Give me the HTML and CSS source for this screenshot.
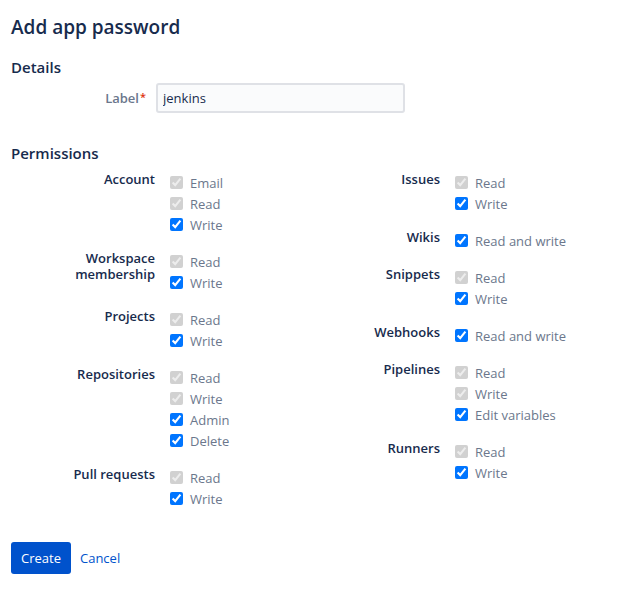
FILE: index.html
```html
<!DOCTYPE html>
<html lang="en">
<head>
    <meta charset="UTF-8">
    <title>Add app password</title>
    <link rel="stylesheet" href="styles.css">
</head>
<body>
    <form class="page">
        <h1 class="page-title">Add app password</h1>

        <h2 class="section-title">Details</h2>
        <div class="field-row">
            <label class="field-label" for="label">Label<span class="required">*</span></label>
            <input class="text-input" type="text" id="label" value="jenkins">
        </div>

        <h2 class="section-title permissions-title">Permissions</h2>
        <div class="perm-columns">
            <div class="perm-column">
                <div class="perm-group">
                    <div class="perm-label">Account</div>
                    <div class="perm-options">
                        <label class="option"><input type="checkbox" checked disabled> Email</label>
                        <label class="option"><input type="checkbox" checked disabled> Read</label>
                        <label class="option"><input type="checkbox" checked> Write</label>
                    </div>
                </div>
                <div class="perm-group">
                    <div class="perm-label">Workspace membership</div>
                    <div class="perm-options">
                        <label class="option"><input type="checkbox" checked disabled> Read</label>
                        <label class="option"><input type="checkbox" checked> Write</label>
                    </div>
                </div>
                <div class="perm-group">
                    <div class="perm-label">Projects</div>
                    <div class="perm-options">
                        <label class="option"><input type="checkbox" checked disabled> Read</label>
                        <label class="option"><input type="checkbox" checked> Write</label>
                    </div>
                </div>
                <div class="perm-group">
                    <div class="perm-label">Repositories</div>
                    <div class="perm-options">
                        <label class="option"><input type="checkbox" checked disabled> Read</label>
                        <label class="option"><input type="checkbox" checked disabled> Write</label>
                        <label class="option"><input type="checkbox" checked> Admin</label>
                        <label class="option"><input type="checkbox" checked> Delete</label>
                    </div>
                </div>
                <div class="perm-group">
                    <div class="perm-label">Pull requests</div>
                    <div class="perm-options">
                        <label class="option"><input type="checkbox" checked disabled> Read</label>
                        <label class="option"><input type="checkbox" checked> Write</label>
                    </div>
                </div>
            </div>

            <div class="perm-column">
                <div class="perm-group">
                    <div class="perm-label">Issues</div>
                    <div class="perm-options">
                        <label class="option"><input type="checkbox" checked disabled> Read</label>
                        <label class="option"><input type="checkbox" checked> Write</label>
                    </div>
                </div>
                <div class="perm-group">
                    <div class="perm-label">Wikis</div>
                    <div class="perm-options">
                        <label class="option"><input type="checkbox" checked> Read and write</label>
                    </div>
                </div>
                <div class="perm-group">
                    <div class="perm-label">Snippets</div>
                    <div class="perm-options">
                        <label class="option"><input type="checkbox" checked disabled> Read</label>
                        <label class="option"><input type="checkbox" checked> Write</label>
                    </div>
                </div>
                <div class="perm-group">
                    <div class="perm-label">Webhooks</div>
                    <div class="perm-options">
                        <label class="option"><input type="checkbox" checked> Read and write</label>
                    </div>
                </div>
                <div class="perm-group">
                    <div class="perm-label">Pipelines</div>
                    <div class="perm-options">
                        <label class="option"><input type="checkbox" checked disabled> Read</label>
                        <label class="option"><input type="checkbox" checked disabled> Write</label>
                        <label class="option"><input type="checkbox" checked> Edit variables</label>
                    </div>
                </div>
                <div class="perm-group">
                    <div class="perm-label">Runners</div>
                    <div class="perm-options">
                        <label class="option"><input type="checkbox" checked disabled> Read</label>
                        <label class="option"><input type="checkbox" checked> Write</label>
                    </div>
                </div>
            </div>
        </div>

        <div class="actions">
            <button type="button" class="btn-primary">Create</button>
            <a href="#" class="btn-link">Cancel</a>
        </div>
    </form>
</body>
</html>
```

FILE: styles.css
```css
body, html {
    margin: 0;
    padding: 0;
    background-color: #fff;
    color: #172b4d;
    font-family: "Open Sans", "Noto Sans", sans-serif;
}
.page {
    padding: 13px 11px 0 11px;
}
.page-title {
    margin: 0;
    font-size: 19px;
    line-height: 28px;
    font-weight: 600;
}
.section-title {
    margin: 16px 0 0 0;
    font-size: 15px;
    line-height: 20px;
    font-weight: 600;
}
.permissions-title {
    margin-top: 30px;
}
.field-row {
    display: flex;
    align-items: center;
    gap: 10px;
    margin-top: 6px;
}
.field-label {
    width: 135px;
    text-align: right;
    font-size: 13px;
    color: #6b778c;
    font-weight: 600;
}
.required {
    color: #de350b;
    font-size: 11px;
    vertical-align: top;
    margin-left: 1px;
}
.text-input {
    box-sizing: border-box;
    width: 249px;
    height: 30px;
    padding: 0 5px;
    border: 2px solid #dfe1e6;
    border-radius: 3px;
    background-color: #fafbfc;
    color: #172b4d;
    font-family: inherit;
    font-size: 13px;
    outline: none;
}
.perm-columns {
    display: grid;
    grid-template-columns: 285px 285px;
    margin-top: 9px;
}
.perm-group {
    display: grid;
    grid-template-columns: 144px auto;
    column-gap: 15px;
    margin-bottom: 16px;
}
.perm-label {
    margin-top: -1px;
    text-align: right;
    font-size: 13px;
    line-height: 16px;
    font-weight: 600;
}
.perm-options {
    display: flex;
    flex-direction: column;
}
.option {
    display: flex;
    align-items: center;
    gap: 7px;
    height: 21px;
    font-size: 13px;
    color: #6b778c;
}
.option input {
    margin: 0;
    width: 13px;
    height: 13px;
}
.actions {
    display: flex;
    align-items: center;
    gap: 9px;
    margin-top: 17px;
}
.btn-primary {
    height: 32px;
    padding: 0 10px;
    border: none;
    border-radius: 3px;
    background-color: #0052cc;
    color: #fff;
    font-family: inherit;
    font-size: 13px;
    cursor: pointer;
}
.btn-link {
    color: #0052cc;
    font-size: 13px;
    text-decoration: none;
}
```
